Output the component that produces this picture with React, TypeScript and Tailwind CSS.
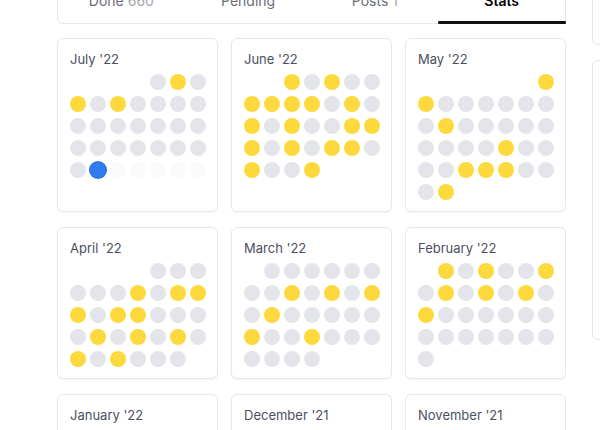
import { Fragment } from 'react';

// ─── Types ────────────────────────────────────────────────────────────────────

type Day = 'y' | 'g' | 't' | 'f';

interface MonthStats {
    label: string;
    offset: number; // leading empty cells, week starts Monday
    days: string; // y = posted, g = missed, t = today, f = future
}

// ─── Data ─────────────────────────────────────────────────────────────────────

const months: MonthStats[] = [
    { label: "July '22", offset: 4, days: 'gyg' + 'ygygggg' + 'ggggggg' + 'ggggggg' + 'gtfffff' },
    { label: "June '22", offset: 2, days: 'ygygg' + 'yyyygyg' + 'ygyggyy' + 'ygygyyg' + 'yggy' },
    { label: "May '22", offset: 6, days: 'y' + 'ygggggg' + 'gyggggg' + 'ggggygg' + 'ggyyygg' + 'gy' },
    { label: "April '22", offset: 4, days: 'ggg' + 'gggygyy' + 'ygyyggg' + 'gygygyg' + 'ygyggg' },
    { label: "March '22", offset: 1, days: 'gggggg' + 'ggygygy' + 'gyggggg' + 'yggyggg' + 'gggg' },
    { label: "February '22", offset: 1, days: 'ygyggy' + 'gygygyg' + 'ygggggg' + 'ggggggg' + 'g' },
    { label: "January '22", offset: 5, days: 'yg' + 'ggygggg' + 'gggyggg' + 'ygggggg' + 'ggyggyg' + 'g' },
    { label: "December '21", offset: 2, days: 'gygyg' + 'ggygggy' + 'gggggyg' + 'ygggggg' + 'gggyg' },
    { label: "November '21", offset: 0, days: 'gggyggy' + 'gyggggg' + 'ggygygg' + 'gggggyg' + 'gy' },
];

const dotClass: Record<Day, string> = {
    y: 'bg-[#fdd93e]',
    g: 'bg-[#e4e5ea]',
    t: 'bg-[#2f7cf2] ring-1 ring-[#2a6fd8]',
    f: 'bg-[#f9fafb]',
};

// ─── Components ───────────────────────────────────────────────────────────────

function MonthCard({ month }: { month: MonthStats }) {
    return (
        <div className="rounded-[6px] border border-[#e7e7ea] bg-white px-[12px] pt-[11px] pb-[11px] shadow-[0_1px_2px_rgba(0,0,0,0.04)]">
            <div className="mb-[6px] text-[13px] leading-[18px] text-[#4b5060]">{month.label}</div>
            <div className="grid grid-cols-[repeat(7,16px)] gap-x-[4px] gap-y-[6px]">
                {Array.from({ length: month.offset }).map((_, i) => (
                    <div key={`e${i}`} className="h-4 w-4" />
                ))}
                {month.days.split('').map((d, i) => (
                    <div key={i} className={`h-4 w-4 rounded-full ${dotClass[d as Day]}`} />
                ))}
            </div>
        </div>
    );
}

const tabs = [
    { label: 'Done', count: '660' },
    { label: 'Pending' },
    { label: 'Posts', count: '1' },
    { label: 'Stats', active: true },
];

export default function App() {
    return (
        <div className="h-[430px] w-[600px] overflow-hidden bg-white font-['Inter','Liberation_Sans',sans-serif]">
            <div className="-mt-[22px] flex gap-[26px] pl-[57px]">
                {/* main column */}
                <div className="w-[509px] shrink-0">
                    <div className="flex h-[46px] rounded-[6px] border border-[#e6e6e8] bg-white">
                        {tabs.map((t) => (
                            <div
                                key={t.label}
                                className="relative flex flex-1 items-center justify-center text-sm"
                            >
                                {t.active ? (
                                    <span className="font-semibold text-black">{t.label}</span>
                                ) : (
                                    <span className="text-[#6b6e76]">
                                        {t.label}
                                        {t.count && (
                                            <Fragment>
                                                {' '}
                                                <span className="text-[#a3a6ad]">{t.count}</span>
                                            </Fragment>
                                        )}
                                    </span>
                                )}
                                {t.active && (
                                    <span className="absolute -right-px -bottom-px left-0 h-[3px] rounded-[1px] bg-[#111111]" />
                                )}
                            </div>
                        ))}
                    </div>

                    <div className="mt-[14px] grid grid-cols-3 gap-x-[13px] gap-y-[15px]">
                        {months.map((m) => (
                            <MonthCard key={m.label} month={m} />
                        ))}
                    </div>
                </div>

                {/* side column */}
                <div className="flex w-[200px] shrink-0 flex-col gap-[15px]">
                    <div className="h-[67px] rounded-[6px] border border-[#e6e6e8] bg-white" />
                    <div className="h-[280px] rounded-[6px] border border-[#e6e6e8] bg-white" />
                </div>
            </div>
        </div>
    );
}
